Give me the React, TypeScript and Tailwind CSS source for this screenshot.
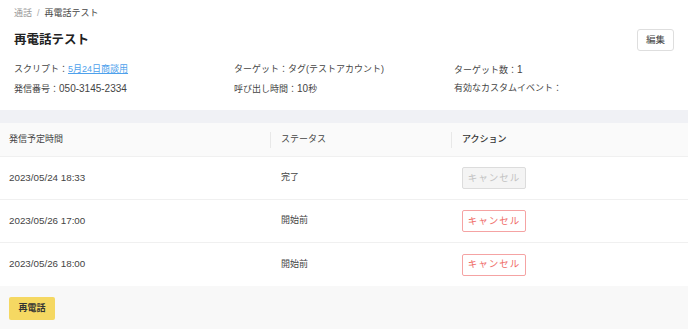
import React from "react";

const font = { fontFamily: '"Liberation Sans", "Noto Sans CJK JP", sans-serif' };

function CancelBtn({ disabled }: { disabled?: boolean }) {
  return disabled ? (
    <div className="flex h-[22px] w-[64px] items-center justify-center rounded-[2px] border border-[#dcdcdc] bg-[#f4f4f4] text-[9.5px] tracking-[1px] text-[#c2c2c2]">
      キャンセル
    </div>
  ) : (
    <div className="flex h-[22px] w-[64px] items-center justify-center rounded-[2px] border border-[#f5a3a3] bg-white text-[9.5px] tracking-[1px] text-[#ef6a66]">
      キャンセル
    </div>
  );
}

const rows = [
  { time: "2023/05/24 18:33", status: "完了", disabled: true },
  { time: "2023/05/26 17:00", status: "開始前", disabled: false },
  { time: "2023/05/26 18:00", status: "開始前", disabled: false },
];

export default function App() {
  return (
    <div className="flex h-[329px] w-[688px] flex-col overflow-hidden bg-white text-[#444]" style={font}>
      <div className="flex h-[110px] flex-col px-[14px]">
        <div className="mt-[7px] flex h-[14px] items-center text-[9px]">
          <span className="text-[#9a9a9a]">通話</span>
          <span className="mx-[5px] text-[#aaa]">/</span>
          <span className="text-[#444]">再電話テスト</span>
        </div>
        <div className="mt-[8px] flex h-[22px] items-center justify-between">
          <div className="text-[12.5px] font-bold text-[#222]">再電話テスト</div>
          <div className="flex h-[22px] w-[37px] items-center justify-center rounded-[3px] border border-[#dedede] bg-white text-[9.5px] text-[#444]">
            編集
          </div>
        </div>
        <div className="mt-[11px] grid h-[14px] grid-cols-3 items-center text-[9px]">
          <div>
            スクリプト：<span className="text-[#4ea1ec] underline">5月24日商談用</span>
          </div>
          <div>ターゲット：タグ(テストアカウント)</div>
          <div>
            ターゲット数：<span className="text-[10px]">1</span>
          </div>
        </div>
        <div className="mt-[5px] grid h-[14px] grid-cols-3 items-center text-[9px]">
          <div>
            発信番号：<span className="text-[10px]">050-3145-2334</span>
          </div>
          <div>
            呼び出し時間：<span className="text-[10px]">10</span>秒
          </div>
          <div>有効なカスタムイベント：</div>
        </div>
      </div>
      <div className="h-[13px] bg-[#f0f1f5]" />
      <div className="flex h-[34px] items-center border-b border-[#f0f0f0] bg-[#fafafa] text-[9px] text-[#444]">
        <div className="w-[270px] pl-[9px]">発信予定時間</div>
        <div className="flex w-[181px] items-center">
          <div className="h-[16px] w-px bg-[#e8e8e8]" />
          <div className="pl-[10px]">ステータス</div>
        </div>
        <div className="flex flex-1 items-center">
          <div className="h-[16px] w-px bg-[#e8e8e8]" />
          <div className="pl-[10px] font-medium text-[#333]">アクション</div>
        </div>
      </div>
      {rows.map((r, i) => (
        <div
          key={i}
          className={`flex h-[43px] items-center ${i < rows.length - 1 ? "border-b border-[#f0f0f0]" : ""}`}
        >
          <div className="w-[270px] pl-[9px] text-[9.8px]">{r.time}</div>
          <div className="w-[181px] pl-[11px] text-[9px]">{r.status}</div>
          <div className="flex-1 pl-[11px]">
            <CancelBtn disabled={r.disabled} />
          </div>
        </div>
      ))}
      <div className="flex flex-1 items-start bg-[#f8f8f8] pl-[9px] pt-[11px]">
        <div className="flex h-[23px] w-[46px] items-center justify-center rounded-[2px] bg-[#f5d862] text-[9px] font-bold text-[#333]">
          再電話
        </div>
      </div>
    </div>
  );
}
